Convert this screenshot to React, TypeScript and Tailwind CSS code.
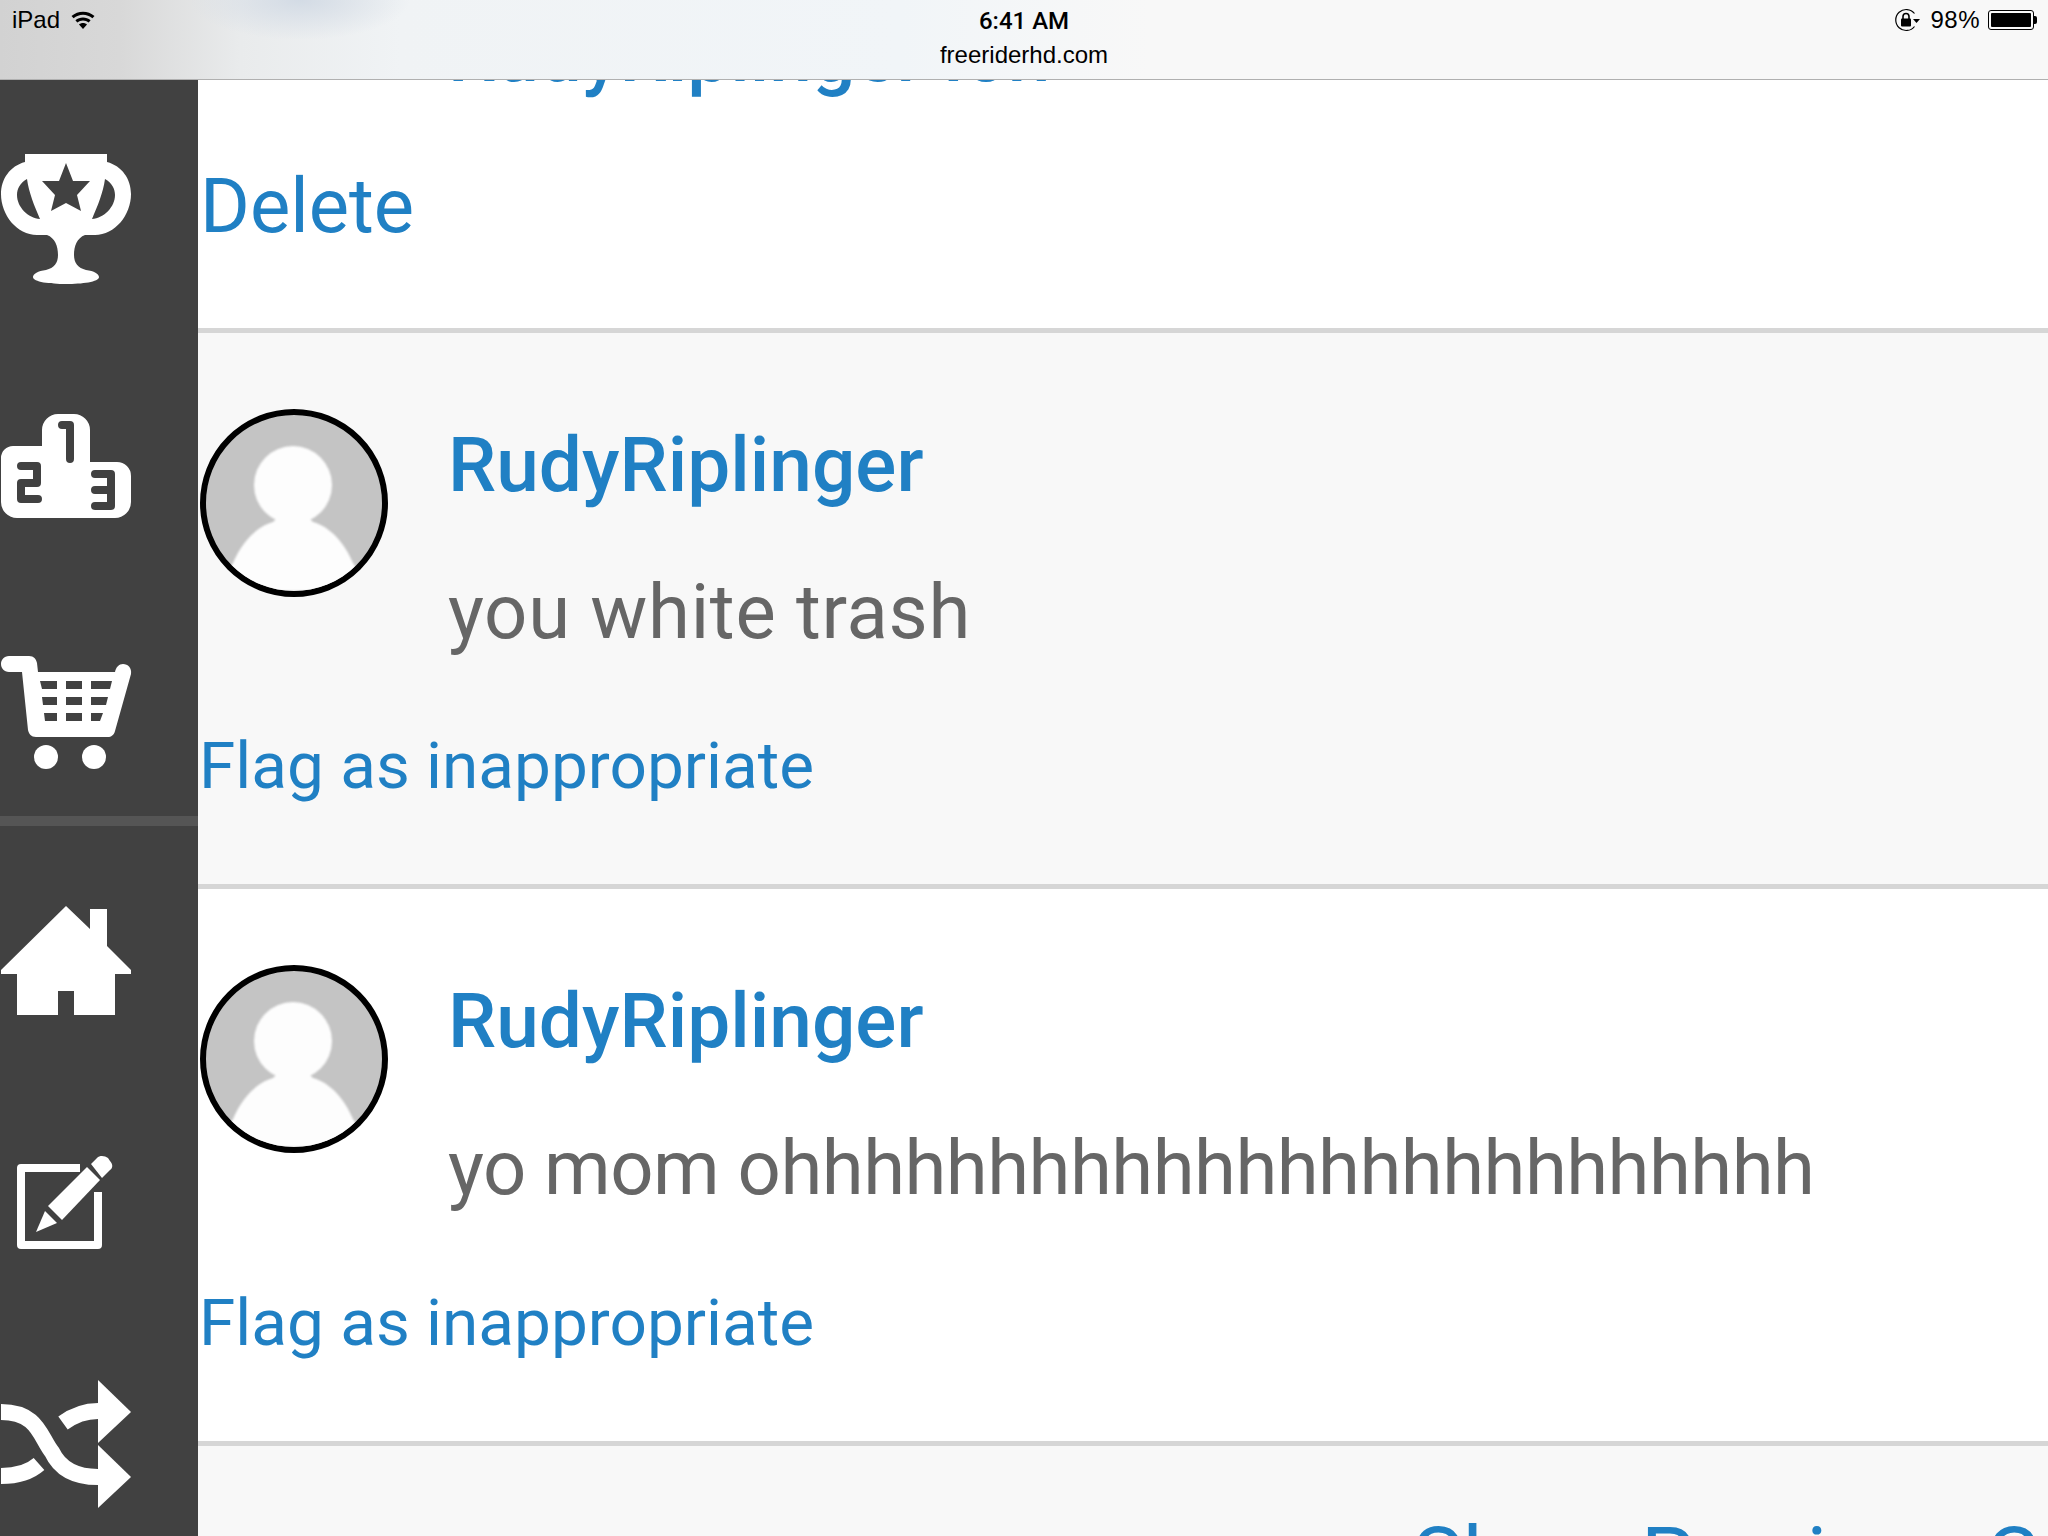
const icon = "h-[132px] w-[132px] shrink-0 fill-white";

function Trophy({ className }: { className: string }) {
  return (
    <svg viewBox="0 0 132 132" className={className} fillRule="evenodd">
      <path d="M25 1H107V9C122 13 131 26 131 41C131 62 115 82 95 82L85 82C77 85 74 93 74 102C74 110 78 115 86 117C94 118 99 121 99 124C99 129 82 131 66 131C50 131 33 129 33 124C33 121 38 118 46 117C54 115 58 110 58 102C58 93 55 85 47 82L37 82C17 82 1 62 1 41C1 26 10 13 25 9ZM27 26C20 30 17 36 17 42C17 54 28 65 40 66C34 52 29 40 27 26ZM105 26C112 30 115 36 115 42C115 54 104 65 92 66C98 52 103 40 105 26ZM66 10L73 28L90 28L77 42L81 58L66 50L51 58L55 42L42 28L59 28Z" />
    </svg>
  );
}

function Podium({ className }: { className: string }) {
  return (
    <svg viewBox="0 0 132 132" className={className}>
      <path d="M1 58a12 12 0 0 1 12-12H42V30a16 16 0 0 1 16-16H74a16 16 0 0 1 16 16V62H117a14 14 0 0 1 14 14V102a16 16 0 0 1-16 16H17a16 16 0 0 1-16-16Z" />
      <path
        d="M62 25H70V59M21 66H37V83H21V99H38M95 74H111V106H95M95 90H111"
        className="fill-none stroke-[#414141] stroke-[8] [stroke-linecap:round] [stroke-linejoin:round]"
      />
    </svg>
  );
}

function Cart({ className }: { className: string }) {
  return (
    <svg viewBox="0 0 132 132" className={className} fillRule="evenodd">
      <path d="M9 9H29C34 9 36 12 37 16L38 25H115C116 20 119 17 123 17C128 17 132 21 131 27L115 84C114 88 111 90 108 90H36C31 90 29 87 28 83L22 25H9C4 25 1 21 1 17C1 13 4 9 9 9ZM40 34L42 42H57V34ZM66 34V42H82V34ZM91 34V42H110L112 34ZM42 50L43 58H57V50ZM66 50V58H82V50ZM91 50V58H106L108 50ZM44 66L45 74H57V66ZM66 66V74H82V66ZM91 66V74H100L103 66Z" />
      <circle cx="46" cy="110" r="12" />
      <circle cx="94" cy="110" r="12" />
    </svg>
  );
}

function Home({ className }: { className: string }) {
  return (
    <svg viewBox="0 0 132 132" className={className}>
      <path d="M66 11L90 34V14H107V51L131 75V79H115V120H74V96H58V120H17V79H1V75Z" />
    </svg>
  );
}

function Edit({ className }: { className: string }) {
  return (
    <svg viewBox="0 0 132 132" className={className}>
      <path
        d="M80 32H21V109H98V56"
        className="fill-none stroke-white stroke-[8] [stroke-linejoin:round]"
      />
      <path d="M36 96L45 75L57 87Z" />
      <path d="M48 70L87 31L100 44L62 84Z" />
      <path d="M91 28L97 22C100 19 105 20 108 22L110 25C113 28 113 32 110 34L102 42Z" />
    </svg>
  );
}

function Shuffle({ className }: { className: string }) {
  return (
    <svg viewBox="0 0 132 132" className={className}>
      <path d="M98 1L131 33L98 64Z" />
      <path d="M98 66L131 98L98 129Z" />
      <path
        d="M1 33C38 33 40 58 52 73C60 90 75 98 98 98M98 32C85 32 74 36 63 44M1 97C18 97 30 93 39 85"
        className="fill-none stroke-white stroke-[16]"
      />
    </svg>
  );
}

function Avatar() {
  return (
    <div className="h-[188px] w-[188px] shrink-0 overflow-hidden rounded-full border-[6px] border-black bg-[#c4c4c4]">
      <svg viewBox="0 0 176 176" className="h-[176px] w-[176px] fill-[#fdfdfd]">
        <g className="[filter:blur(1px)]">
          <circle cx="87" cy="70" r="39" />
          <path d="M67 107C49 112 35 129 27 148L9 176H165L147 148C139 129 125 112 107 107L100 100H74Z" />
        </g>
      </svg>
    </div>
  );
}

function Comment({
  text,
  shade,
  flagSpace,
  tracking,
}: {
  text: string;
  shade: string;
  flagSpace: string;
  tracking: string;
}) {
  return (
    <div className={shade}>
      <div className="flex items-start pl-[2px] pt-[76px]">
        <Avatar />
        <div className="ml-[60px] pt-[18px]">
          <div className="text-[76.6px] font-medium leading-none text-[#2080c4]">RudyRiplinger</div>
          <div className={`${tracking} mt-[70px] text-[76px] leading-none text-[#666666]`}>{text}</div>
        </div>
      </div>
      <div className={`${flagSpace} pl-[1px] text-[65.7px] leading-none text-[#2080c4]`}>
        Flag as inappropriate
      </div>
    </div>
  );
}

const Separator = () => <div className="h-[5px] bg-[#d6d6d6]" />;

export default function App() {
  return (
    <div className="flex h-[1536px] w-[2048px] flex-col overflow-hidden bg-white font-['Roboto',sans-serif]">
      <header className="relative z-10 grid h-[80px] shrink-0 grid-cols-[1fr_auto_1fr] border-b border-[#b0b0b0] bg-[radial-gradient(ellipse_110px_40px_at_300px_0px,#d3dbe5,transparent),linear-gradient(90deg,#d2d2d2_0px,#d8d8d8_120px,#e9ebec_240px,#f0f3f5_400px,#f1f5f8_900px,#f8f8f8_1150px)] font-['Liberation_Sans',sans-serif] text-[24px] leading-none text-black">
        <div className="flex h-[40px] items-center pl-[12px]">
          <span>iPad</span>
          <svg viewBox="0 0 24 18" className="ml-[11px] h-[18px] w-[24px] fill-black">
            <path d="M12 18L8 13.5C10.3 11.5 13.7 11.5 16 13.5ZM6.3 11.5L4.4 9.3C8.8 5.6 15.2 5.6 19.6 9.3L17.7 11.5C14.4 8.8 9.6 8.8 6.3 11.5ZM2.6 7.3L0.5 5C7 -0.8 17 -0.8 23.5 5L21.4 7.3C16 2.6 8 2.6 2.6 7.3Z" />
          </svg>
        </div>
        <div className="flex flex-col items-center pt-[9px]">
          <span className="font-['Roboto',sans-serif] font-medium">6:41 AM</span>
          <span className="mt-[10px]">freeriderhd.com</span>
        </div>
        <div className="flex h-[40px] items-center justify-end pr-[11px]">
          <svg viewBox="0 0 26 24" className="h-[24px] w-[26px]">
            <path d="M20.5 5.5A10.5 10.5 0 1 0 20.5 18.5" className="fill-none stroke-black stroke-[1.2]" />
            <path d="M19 11H26L22.5 15Z" />
            <rect x="7" y="10.5" width="10" height="8" rx="1" />
            <path d="M9 11V8.5A3 3 0 0 1 15 8.5V11" className="fill-none stroke-black stroke-[1.6]" />
          </svg>
          <span className="ml-[10px] tracking-[0.5px]">98%</span>
          <div className="ml-[8px] h-[20px] w-[46px] rounded-[3px] border border-black p-[2px]">
            <div className="h-full w-full rounded-[1px] bg-black" />
          </div>
          <div className="h-[8px] w-[3px] rounded-r-[2px] bg-black" />
        </div>
      </header>

      <div className="flex min-h-0 flex-1">
        <aside className="flex w-[198px] shrink-0 flex-col bg-[#414141] pt-[73px]">
          <Trophy className={icon} />
          <Podium className={`${icon} mt-[115px]`} />
          <Cart className={`${icon} mt-[115px]`} />
          <div className="mt-[37px] h-[10px] shrink-0 bg-[#555555]" />
          <Home className={`${icon} mt-[69px]`} />
          <Edit className={`${icon} mt-[109px]`} />
          <Shuffle className={`${icon} mt-[111px]`} />
        </aside>

        <main className="min-w-0 flex-1 overflow-hidden">
          <div className="flow-root h-[248px] bg-white">
            <div className="-mt-[63px] pl-[250px] text-[76.6px] font-medium leading-none whitespace-nowrap text-[#2080c4]">
              RudyRiplinger Ion
            </div>
            <div className="mt-[74px] pl-[2px] text-[76px] leading-none text-[#2080c4]">Delete</div>
          </div>
          <Separator />
          <Comment text="you white trash" shade="bg-[#f8f8f8]" flagSpace="mt-[83px] pb-[86px]" tracking="tracking-[0.7px]" />
          <Separator />
          <Comment text="yo mom ohhhhhhhhhhhhhhhhhhhhhhhhh" shade="bg-white" flagSpace="mt-[84px] pb-[85px]" tracking="tracking-[-0.5px]" />
          <Separator />
          <div className="h-[200px] whitespace-nowrap bg-[#f8f8f8] pl-[1215px] pt-[70px] text-[84px] leading-none text-[#2080c4]">
            Show Previous Comments
          </div>
        </main>
      </div>
    </div>
  );
}
